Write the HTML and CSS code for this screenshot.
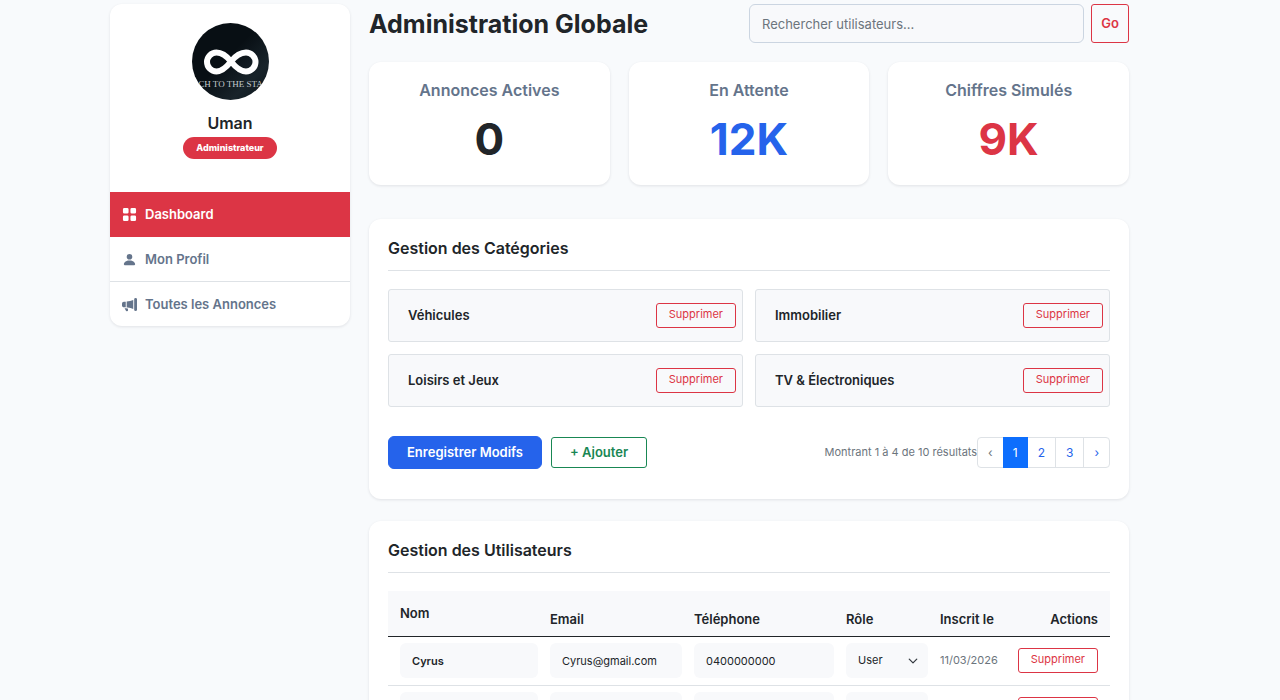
FILE: index.html
```html
<!DOCTYPE html>
<html lang="fr">
<head>
<meta charset="utf-8">
<meta name="viewport" content="width=device-width, initial-scale=1">
<title>Administration Globale</title>
<link rel="stylesheet" href="styles.css">
</head>
<body>
<div class="page">
  <aside class="card sidebar">
    <div class="profile">
      <svg class="avatar" viewBox="0 0 77 77" role="img" aria-label="Photo de profil">
        <defs>
          <clipPath id="disc"><circle cx="38.5" cy="38.5" r="38.5"/></clipPath>
          <linearGradient id="sky" x1="0" y1="0" x2="1" y2="1"><stop offset="0.45" stop-color="#080f14"/><stop offset="0.75" stop-color="#18232a"/><stop offset="1" stop-color="#0c151a"/></linearGradient>
        </defs>
        <g clip-path="url(#disc)">
          <rect width="77" height="77" fill="url(#sky)"/>
          <path d="M39 38.500C33 31 29 29.500 24.500 29.500a9.500 9.500 0 0 0 0 19C29 48.500 33 46 39 38.500S50 29.500 54 29.500a9.500 9.500 0 0 1 0 19C50 48.500 45 46 39 38.500Z" fill="none" stroke="#fff" stroke-width="6"/>
          <text class="avatar-text" x="38.500" y="64" text-anchor="middle">CH TO THE STA</text>
        </g>
      </svg>
      <h2 class="name">Uman</h2>
      <span class="badge">Administrateur</span>
    </div>
    <nav class="menu">
      <a class="menu-item active" href="#dashboard">
        <svg class="icon" viewBox="0 0 16 16"><path d="M1 2.500A1.500 1.500 0 0 1 2.500 1h3A1.500 1.500 0 0 1 7 2.500v3A1.500 1.500 0 0 1 5.500 7h-3A1.500 1.500 0 0 1 1 5.500zm8 0A1.500 1.500 0 0 1 10.500 1h3A1.500 1.500 0 0 1 15 2.500v3A1.500 1.500 0 0 1 13.500 7h-3A1.500 1.500 0 0 1 9 5.500zm-8 8A1.500 1.500 0 0 1 2.500 9h3A1.500 1.500 0 0 1 7 10.500v3A1.500 1.500 0 0 1 5.500 15h-3A1.500 1.500 0 0 1 1 13.500zm8 0A1.500 1.500 0 0 1 10.500 9h3a1.500 1.500 0 0 1 1.500 1.500v3a1.500 1.500 0 0 1-1.500 1.500h-3A1.500 1.500 0 0 1 9 13.500z"/></svg>
        <span>Dashboard</span>
      </a>
      <a class="menu-item" href="#profil">
        <svg class="icon" viewBox="0 0 16 16"><path d="M3 14s-1 0-1-1 1-4 6-4 6 3 6 4-1 1-1 1zm5-6a3 3 0 1 0 0-6 3 3 0 0 0 0 6"/></svg>
        <span>Mon Profil</span>
      </a>
      <a class="menu-item" href="#annonces">
        <svg class="icon" viewBox="0 0 16 16"><path d="M13 2.500a1.500 1.500 0 0 1 3 0v11a1.500 1.500 0 0 1-3 0zm-1 .724c-2.067.95-4.539 1.481-7 1.656v6.237a25 25 0 0 1 1.088.085c2.053.204 4.038.668 5.912 1.560zm-8 7.841V4.934c-.68.027-1.399.043-2.008.053A2.020 2.020 0 0 0 0 7v2c0 1.106.896 1.996 1.994 2.009l.496.008a64 64 0 0 1 1.510.048m1.390 1.081q.428.032.85.078l.253 1.690a1 1 0 0 1-.983 1.187h-.548a1 1 0 0 1-.916-.599l-1.314-2.480a66 66 0 0 1 1.692.064q.491.026.966.060"/></svg>
        <span>Toutes les Annonces</span>
      </a>
    </nav>
  </aside>

  <main class="main">
    <header class="topbar">
      <h1 class="title">Administration Globale</h1>
      <form class="search" role="search">
        <input class="search-input" type="search" aria-label="Rechercher utilisateurs" placeholder="Rechercher utilisateurs...">
        <button class="btn-go" type="submit">Go</button>
      </form>
    </header>

    <section class="stats">
      <div class="card stat"><h2 class="stat-label">Annonces Actives</h2><p class="stat-value">0</p></div>
      <div class="card stat"><h2 class="stat-label">En Attente</h2><p class="stat-value blue">12K</p></div>
      <div class="card stat"><h2 class="stat-label">Chiffres Simulés</h2><p class="stat-value red">9K</p></div>
    </section>

    <section class="card panel categories">
      <h2 class="panel-title">Gestion des Catégories</h2>
      <div class="category-grid">
        <div class="category"><span>Véhicules</span><button class="btn-delete" type="button">Supprimer</button></div>
        <div class="category"><span>Immobilier</span><button class="btn-delete" type="button">Supprimer</button></div>
        <div class="category"><span>Loisirs et Jeux</span><button class="btn-delete" type="button">Supprimer</button></div>
        <div class="category"><span>TV &amp; Électroniques</span><button class="btn-delete" type="button">Supprimer</button></div>
      </div>
      <div class="actions">
        <button class="btn-save" type="button">Enregistrer Modifs</button>
        <button class="btn-add" type="button">+ Ajouter</button>
        <span class="results">Montrant 1 à 4 de 10 résultats</span>
        <nav class="pagination" aria-label="Pagination">
          <span class="page-link disabled">‹</span>
          <a class="page-link current" href="#p1" aria-current="page">1</a>
          <a class="page-link" href="#p2">2</a>
          <a class="page-link" href="#p3">3</a>
          <a class="page-link" href="#p2">›</a>
        </nav>
      </div>
    </section>

    <section class="card panel">
      <h2 class="panel-title">Gestion des Utilisateurs</h2>
      <table class="users">
        <colgroup><col class="col-name"><col class="col-email"><col class="col-phone"><col class="col-role"><col class="col-date"><col class="col-actions"></colgroup>
        <thead>
          <tr><th class="th-name">Nom</th><th>Email</th><th>Téléphone</th><th>Rôle</th><th>Inscrit le</th><th class="cell-actions">Actions</th></tr>
        </thead>
        <tbody>
          <tr>
            <td><input class="field strong" type="text" aria-label="Nom" value="Cyrus"></td>
            <td><input class="field" type="email" aria-label="Email" value="Cyrus@gmail.com"></td>
            <td><input class="field" type="tel" aria-label="Téléphone" value="0400000000"></td>
            <td><select class="field select" aria-label="Rôle"><option>User</option></select></td>
            <td class="date">11/03/2026</td>
            <td class="cell-actions"><button class="btn-delete" type="button">Supprimer</button></td>
          </tr>
          <tr>
            <td><input class="field strong" type="text" aria-label="Nom"></td>
            <td><input class="field" type="email" aria-label="Email"></td>
            <td><input class="field" type="tel" aria-label="Téléphone"></td>
            <td><select class="field select" aria-label="Rôle"><option>User</option></select></td>
            <td class="date"></td>
            <td class="cell-actions"><button class="btn-delete" type="button">Supprimer</button></td>
          </tr>
        </tbody>
      </table>
    </section>
  </main>
</div>
</body>
</html>
```
FILE: styles.css
```css
:root {
  --ink: #212529;
  --muted: #64748b;
  --red: #dc3545;
  --blue: #2563eb;
  --green: #198754;
  --line: #dee2e6;
  --soft: #f8f9fb;
}

* { box-sizing: border-box; }

body {
  margin: 0;
  background: #f8fafc;
  color: var(--ink);
  font-family: Inter, "Liberation Sans", sans-serif;
  font-size: 13px;
  line-height: 19px;
}

h1, h2, p { margin: 0; }
a { text-decoration: none; }
button, input, select { font: inherit; color: inherit; }
button { cursor: pointer; white-space: nowrap; }

.page {
  display: grid;
  grid-template-columns: 240px minmax(0, 1fr);
  gap: 19px;
  align-items: start;
  padding: 4px 151px 22px 110px;
}

.card {
  background: #fff;
  border-radius: 12px;
  box-shadow: 0 1px 3px rgba(15, 23, 42, 0.1);
}

/* Sidebar */
.sidebar { overflow: hidden; }
.profile {
  display: flex;
  flex-direction: column;
  align-items: center;
  padding: 19px 19px 33px;
}
.avatar { width: 77px; height: 77px; }
.avatar-text { font: 9px "Liberation Serif", serif; fill: #c3c9cc; }
.name { margin-top: 13px; font-size: 16px; line-height: 20px; font-weight: 600; }
.badge {
  margin-top: 4px;
  padding: 0 13px;
  border-radius: 11px;
  background: var(--red);
  color: #fff;
  font-size: 9px;
  line-height: 22px;
  font-weight: 800;
}
.menu-item {
  display: flex;
  align-items: center;
  gap: 8px;
  padding: 13px 12px 12px;
  border-bottom: 1px solid var(--line);
  color: var(--muted);
  font-weight: 600;
}
.menu-item:last-child { border-bottom: 0; }
.menu-item.active { background: var(--red); border-color: var(--red); color: #fff; }
.icon { width: 15px; height: 15px; fill: currentColor; }

/* Header */
.topbar { display: flex; align-items: center; justify-content: space-between; }
.title { font-size: 25px; line-height: 32px; font-weight: 700; }
.search { display: flex; gap: 7px; width: 50%; }
.search-input {
  flex: 1;
  min-width: 0;
  height: 39px;
  padding: 0 12px;
  border: 1px solid #cbd5e1;
  border-radius: 6px;
  background: var(--soft);
  appearance: none;
}
.search-input::placeholder { color: #6c757d; opacity: 1; }
.btn-go {
  padding: 0 9px;
  border: 1px solid var(--red);
  border-radius: 3px;
  background: none;
  color: var(--red);
  font-weight: 600;
}

/* Statistics */
.stats {
  display: grid;
  grid-template-columns: repeat(3, 1fr);
  gap: 19px;
  margin-top: 19px;
}
.stat { padding: 19px; text-align: center; }
.stat-label { color: var(--muted); font-size: 16px; line-height: 19px; font-weight: 600; }
.stat-value { margin-top: 12px; font-size: 44px; line-height: 54px; font-weight: 700; }
.blue { color: var(--blue); }
.red { color: var(--red); }

/* Panels */
.panel { margin-top: 22px; padding: 19px 19px 30px; }
.categories { margin-top: 34px; }
.panel-title {
  margin-bottom: 18px;
  padding-bottom: 12px;
  border-bottom: 1px solid var(--line);
  font-size: 16px;
  line-height: 20px;
  font-weight: 600;
}
.category-grid { display: grid; grid-template-columns: 1fr 1fr; gap: 12px; }
.category {
  display: flex;
  align-items: center;
  justify-content: space-between;
  height: 53px;
  padding: 0 6px 0 19px;
  border: 1px solid var(--line);
  border-radius: 3px;
  background: var(--soft);
  font-weight: 600;
}
.btn-delete {
  padding: 0 12px 2px;
  border: 1px solid var(--red);
  border-radius: 3px;
  background: none;
  color: var(--red);
  font-size: 11px;
  line-height: 21px;
  font-weight: 400;
}
.actions { display: flex; align-items: center; margin-top: 29px; }
.btn-save, .btn-add { padding: 0 18px; border: 1px solid; font-weight: 600; }
.btn-save {
  height: 33px;
  border-color: var(--blue);
  border-radius: 6px;
  background: var(--blue);
  color: #fff;
}
.btn-add {
  height: 31px;
  margin-left: 9px;
  border-color: var(--green);
  border-radius: 3px;
  background: none;
  color: var(--green);
}
.results { margin-left: auto; color: #6c757d; font-size: 11px; }
.pagination {
  display: flex;
  height: 31px;
  border: 1px solid var(--line);
  border-radius: 4px;
  font-size: 12px;
}
.page-link {
  padding: 0 10px;
  border-left: 1px solid var(--line);
  color: var(--blue);
  line-height: 29px;
}
.page-link:first-child { border-left: 0; }
.disabled { color: #6c757d; }
.current { margin: -1px 0; border: 0; background: #0d6efd; color: #fff; line-height: 31px; }
.current + .page-link { border-left: 0; }

/* Users table */
.users { width: 100%; table-layout: fixed; border-collapse: separate; border-spacing: 0; }
.col-name { width: 150px; }
.col-email { width: 144px; }
.col-phone { width: 152px; }
.col-role { width: 94px; }
.col-date { width: 76px; }
.col-actions { width: 106px; }
.users th {
  height: 46px;
  padding: 0 0 7px 12px;
  border-bottom: 1px solid var(--ink);
  background: var(--soft);
  font-weight: 600;
  text-align: left;
  vertical-align: bottom;
  white-space: nowrap;
}
.users .th-name { padding-bottom: 0; vertical-align: middle; }
.users td { padding: 6px 0 7px 12px; border-bottom: 1px solid var(--line); font-size: 11px; }
.users .cell-actions { padding-right: 12px; padding-left: 0; text-align: right; }
.date { color: #6c757d; }
.field {
  display: block;
  width: 100%;
  height: 35px;
  padding: 0 12px;
  border: 0;
  border-radius: 6px;
  background-color: var(--soft);
}
.strong { font-weight: 600; }
.select {
  appearance: none;
  background-image: url("data:image/svg+xml,%3Csvg xmlns='http://www.w3.org/2000/svg' viewBox='0 0 16 16'%3E%3Cpath fill='none' stroke='%23343a40' stroke-linecap='round' stroke-linejoin='round' stroke-width='2' d='m2 5 6 6 6-6'/%3E%3C/svg%3E");
  background-repeat: no-repeat;
  background-position: right 10px center;
  background-size: 10px 10px;
}
```
